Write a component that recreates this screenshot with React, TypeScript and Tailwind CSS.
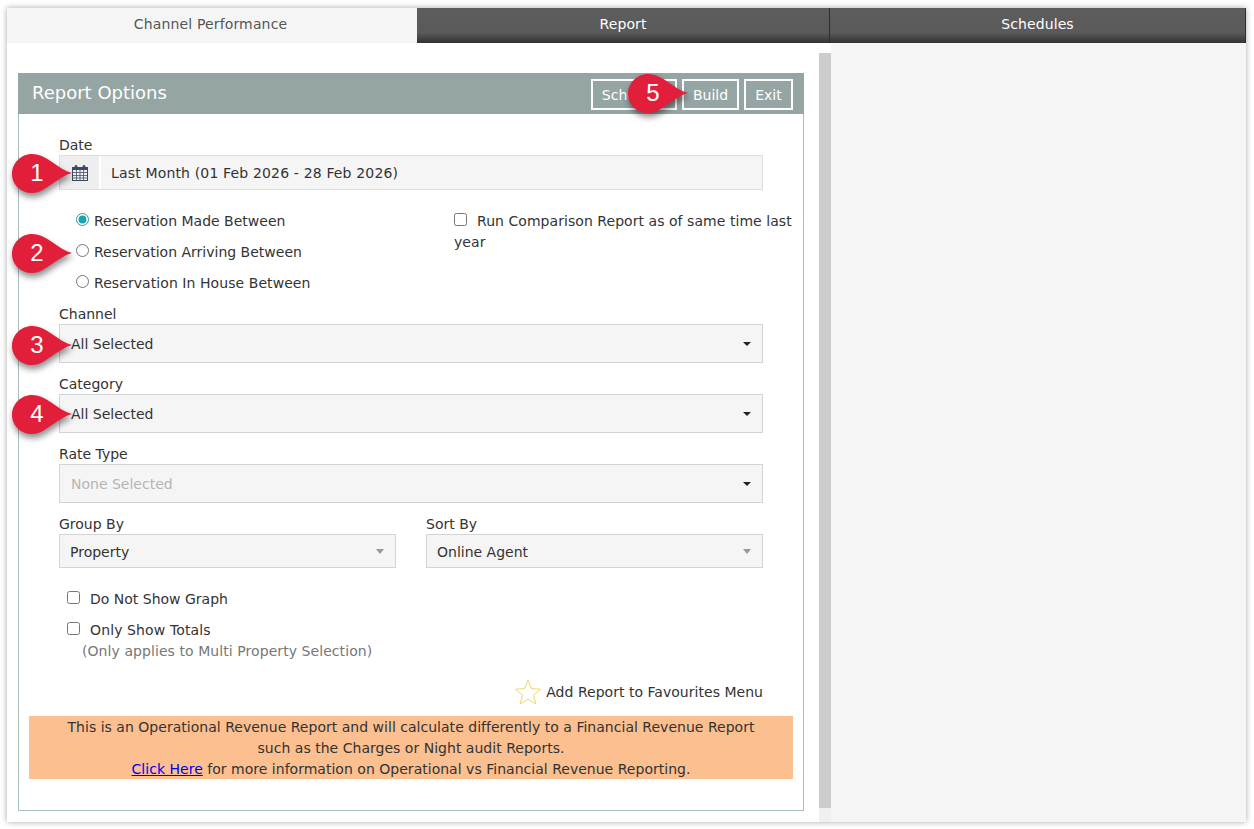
const font = "font-['DejaVu_Sans',Verdana,sans-serif]";

function Caret({ light }: { light?: boolean }) {
  return (
    <span
      className={
        light
          ? "h-0 w-0 border-x-[4px] border-t-[5px] border-x-transparent border-t-[#999]"
          : "h-0 w-0 border-x-[4px] border-t-[4px] border-x-transparent border-t-[#222]"
      }
    />
  );
}

function Callout({ n, className }: { n: number; className: string }) {
  return (
    <div className={"absolute h-[48px] w-[66px] " + className}>
      <svg viewBox="0 0 66 48" className="absolute inset-0 h-full w-full drop-shadow-[1px_4px_3px_rgba(0,0,0,0.45)]">
        <path d="M22 3 C30 3 36 7 42 11 C49 16 55 20 62 22 C55 24 49 28 42 33 C36 37 30 42 22 42 C11 42 2 34 2 23 C2 12 11 3 22 3 Z" fill="#e21f3a" />
      </svg>
      <span className="absolute left-[2px] top-[2px] flex h-[39px] w-[50px] items-center justify-center font-['Liberation_Sans',Arial,sans-serif] text-[24px] text-white">
        {n}
      </span>
    </div>
  );
}

function FieldSelect({ label, value, muted, top }: { label: string; value: string; muted?: boolean; top: string }) {
  return (
    <div className={top}>
      <div className="h-5 leading-5">{label}</div>
      <div className="flex h-[39px] w-[704px] items-center justify-between border border-[#d4d4d4] bg-[#f5f5f5] pl-[11px] pr-[11px]">
        <span className={muted ? "pt-[2px] text-[#b5b5b5]" : "pt-[2px]"}>{value}</span>
        <Caret />
      </div>
    </div>
  );
}

function SmallSelect({ label, value }: { label: string; value: string }) {
  return (
    <div className="w-[337px]">
      <div className="h-5 leading-5">{label}</div>
      <div className="flex h-[34px] items-center justify-between border border-[#d4d4d4] bg-[#f5f5f5] pl-[10px] pr-[11px]">
        <span className="pt-[2px]">{value}</span>
        <Caret light />
      </div>
    </div>
  );
}

function Radio({ label, checked, wide }: { label: string; checked?: boolean; wide?: boolean }) {
  return (
    <label className="flex h-[31px] items-center">
      <input type="radio" name="dateType" defaultChecked={checked} className="m-0 mb-[2px] h-[13px] w-[13px] accent-[#1aa3ad]" />
      <span className={wide ? "ml-[5px] pt-[2px] tracking-[0.07px]" : "ml-[5px] pt-[2px]"}>{label}</span>
    </label>
  );
}

function Check({ label, wide }: { label: string; wide?: boolean }) {
  return (
    <label className="flex h-[31px] items-center">
      <input type="checkbox" className="m-0 mb-[2px] h-[13px] w-[13px]" />
      <span className={wide ? "ml-[10px] pt-[2px] tracking-[0.12px]" : "ml-[10px] pt-[2px]"}>{label}</span>
    </label>
  );
}

function Tab({ label, className }: { label: string; className: string }) {
  return (
    <div className={"flex h-[35px] items-center justify-center border-r border-[#332a2e] bg-gradient-to-b from-[#5d5d5d] via-[#5a5a5a] via-70% to-[#333333] pb-[2px] tracking-[0.1px] text-white " + className}>
      {label}
    </div>
  );
}

const actions = [
  { label: "Schedule", width: "w-[86px]" },
  { label: "Build", width: "w-[57px]" },
  { label: "Exit", width: "w-[49px]" },
];

export default function App() {
  return (
    <div className={"relative h-[829px] w-[1254px] overflow-hidden bg-white pb-[7px] pl-[7px] pr-[8px] pt-[8px] text-[14px] text-[#333] " + font}>
      <div className="flex h-full flex-col bg-white shadow-[0_0_6px_rgba(0,0,0,0.35)]">
        <div className="flex">
          <div className="flex h-[35px] w-[410px] items-center justify-center bg-[#f5f5f5] pb-[2px] pr-[3px] tracking-[0.15px] text-[#555]">Channel Performance</div>
          <Tab label="Report" className="w-[413px]" />
          <Tab label="Schedules" className="flex-1" />
        </div>

        <div className="flex flex-1">
          <div className="flex w-[824px] pl-[11px]">
            <div className="mt-[30px] h-[738px] w-[786px] border border-[#a9bfba] border-t-0">
              <div className="-mx-px flex h-[41px] items-start justify-between bg-[#95a5a3] pl-[14px] pr-[11px] text-white">
                <span className="pt-[10px] text-[18px] font-medium leading-5">Report Options</span>
                <div className="flex gap-[5px] pt-[6px]">
                  {actions.map((b) => (
                    <div key={b.label} className={"flex h-[31px] items-center justify-center border-2 border-white pt-[2px] " + b.width}>
                      {b.label}
                    </div>
                  ))}
                </div>
              </div>

              <div className="pl-[40px] pt-[21px]">
                <div className="h-5 leading-5">Date</div>
                <div className="flex h-[35px] w-[704px] border border-[#dedede] bg-[#f5f5f5]">
                  <div className="flex w-[41px] items-center justify-center border-r-2 border-white bg-[#eeeeee]">
                    <svg viewBox="0 0 16 16" className="h-[16px] w-[16px]" fill="none" stroke="#3d4a63" strokeWidth="1">
                      <rect x="0.5" y="2.5" width="15" height="13" />
                      <rect x="0.5" y="2.5" width="15" height="2" fill="#3d4a63" />
                      <path d="M0.5 7.5H15.5M0.5 10.5H15.5M0.5 13H15.5M4.5 5V15M8 5V15M11.5 5V15" strokeOpacity="0.75" />
                      <rect x="3" y="0.5" width="2" height="4" rx="1" fill="#3d4a63" />
                      <rect x="11" y="0.5" width="2" height="4" rx="1" fill="#3d4a63" />
                    </svg>
                  </div>
                  <div className="flex flex-1 items-center pl-[10px] pt-[2px] tracking-[0.16px]">Last Month (01 Feb 2026 - 28 Feb 2026)</div>
                </div>

                <div className="mt-[15px] flex">
                  <div className="ml-[17px] w-[378px]">
                    <Radio label="Reservation Made Between" checked />
                    <Radio label="Reservation Arriving Between" />
                    <Radio label="Reservation In House Between" wide />
                  </div>
                  <div className="w-[339px] pt-[6px] leading-[21px] tracking-[0.05px]">
                    <input type="checkbox" className="m-0 mr-[10px] h-[13px] w-[13px] align-[0px]" />
                    Run Comparison Report as of same time last year
                  </div>
                </div>

                <FieldSelect top="mt-[6px]" label="Channel" value="All Selected" />
                <FieldSelect top="mt-[11px]" label="Category" value="All Selected" />
                <FieldSelect top="mt-[11px]" label="Rate Type" value="None Selected" muted />

                <div className="mt-[11px] flex w-[704px] justify-between">
                  <SmallSelect label="Group By" value="Property" />
                  <SmallSelect label="Sort By" value="Online Agent" />
                </div>

                <div className="mt-[15px] pl-[8px]">
                  <Check label="Do Not Show Graph" />
                  <Check label="Only Show Totals" wide />
                  <div className="-mt-[4px] pl-[15px] leading-5 tracking-[0.07px] text-[#777]">(Only applies to Multi Property Selection)</div>
                </div>

                <div className="mt-[19px] flex h-[24px] w-[705px] items-center justify-end">
                  <svg viewBox="0 0 26 26" className="mr-[5px] h-[26px] w-[26px]" fill="none" stroke="#f3d76b" strokeWidth="1">
                    <path d="M13 1L16.4 9.6L25.5 10.2L18.5 16L20.8 25L13 20.1L5.2 25L7.5 16L0.5 10.2L9.6 9.6Z" />
                  </svg>
                  <span className="mr-[1px] tracking-[0.03px]">Add Report to Favourites Menu</span>
                </div>
              </div>

              <div className="ml-[10px] mt-[12px] h-[63px] w-[764px] bg-[#fbbf90] pt-px text-center leading-[21px] tracking-[0.02px]">
                This is an Operational Revenue Report and will calculate differently to a Financial Revenue Report
                <br />
                such as the Charges or Night audit Reports.
                <br />
                <a href="#" className="text-[#0000ee] underline">Click Here</a> for more information on Operational vs Financial Revenue Reporting.
              </div>
            </div>
            <div className="ml-[15px] mt-[10px] flex w-[12px] flex-col">
              <div className="h-[755px] bg-[#cccccc]" />
              <div className="h-[14px] bg-[#f0f0f0]" />
            </div>
          </div>
          <div className="flex-1 bg-[#f5f5f5]" />
        </div>
      </div>

      <Callout n={1} className="left-[10px] top-[151px]" />
      <Callout n={2} className="left-[10px] top-[231px]" />
      <Callout n={3} className="left-[10px] top-[323px]" />
      <Callout n={4} className="left-[10px] top-[392px]" />
      <Callout n={5} className="left-[626px] top-[71px]" />
    </div>
  );
}
